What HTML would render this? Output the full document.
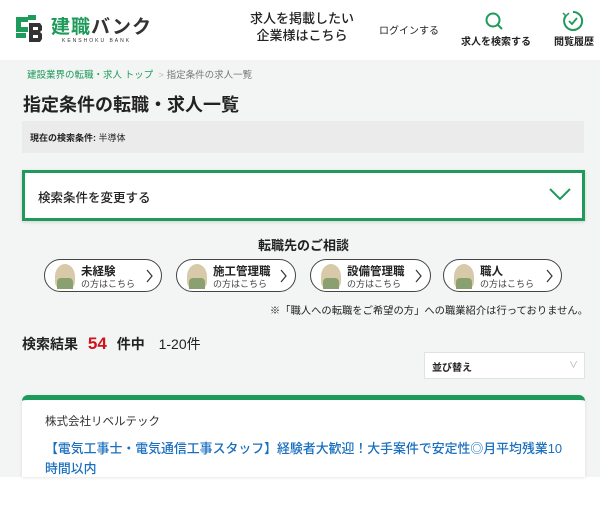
<!DOCTYPE html><html><head><meta charset="utf-8"><style>
*{margin:0;padding:0;box-sizing:border-box}
body{width:600px;height:518px;overflow:hidden;background:#fff;font-family:"Liberation Sans","Noto Sans CJK JP",sans-serif;color:#222;position:relative}
.a{position:absolute;white-space:nowrap}
.bg{position:absolute;left:0;top:60px;width:600px;height:417px;background:#f3f4f4}
.pill{position:absolute;top:259px;height:33px;border:1px solid #444;border-radius:17px;background:#fff}
.pill .f{position:absolute;left:10px;top:4px;width:20px;height:25px;border-radius:50% 50% 30% 30%;background:#d8c9a8}
.pill .f::after{content:"";position:absolute;left:2px;top:14px;width:16px;height:11px;background:#8aa070;border-radius:4px 4px 0 0}
.pill b{position:absolute;left:36px;top:3px;font-size:11.5px}
.pill s{text-decoration:none;position:absolute;left:36px;top:17px;font-size:9px;color:#444}
.pill svg{position:absolute;right:8px;top:9px}
</style></head><body>
<div class="bg"></div>
<svg class="a" style="left:14px;top:13px" width="30" height="30" viewBox="0 0 30 30"><path d="M2 4h12v5H7v5h7v5H2z" fill="#1e9a5a"/><path d="M14 2h8v5h-8zM2 20h10v5H2z" fill="#1e9a5a"/><path d="M15 10h11l2 3v4l-2 2 2 2v5l-2 3H15z" fill="#333"/><path d="M19 14h5v3h-5zM19 22h5v3h-5z" fill="#fff"/></svg>
<div class="a" style="left:51px;top:12px;font-size:19px;font-weight:bold;letter-spacing:1px"><span style="color:#1e9a5a">建職</span><span style="color:#333">バンク</span></div>
<div class="a" style="left:62px;top:38px;font-size:5px;letter-spacing:2px;color:#333">KENSHOKU BANK</div>
<div class="a" style="left:250px;top:10px;font-size:13px;line-height:17px;text-align:center;font-weight:500">求人を掲載したい<br>企業様はこちら</div>
<div class="a" style="left:379px;top:22px;font-size:10px">ログインする</div>
<svg class="a" style="left:484px;top:11px" width="20" height="20" viewBox="0 0 20 20"><circle cx="9" cy="9" r="6.5" fill="none" stroke="#1e9a5a" stroke-width="2"/><path d="M13.5 13.5l4.5 4.5" stroke="#1e9a5a" stroke-width="2"/></svg>
<div class="a" style="left:461px;top:33px;font-size:10px;font-weight:bold">求人を検索する</div>
<svg class="a" style="left:561px;top:9px" width="24" height="24" viewBox="0 0 24 24"><path d="M12 3a9 9 0 1 1-7 3.5" fill="none" stroke="#1e9a5a" stroke-width="2"/><path d="M2 4l3 3 3-3" fill="none" stroke="#1e9a5a" stroke-width="1.5"/><path d="M8 12l3 3 5-6" fill="none" stroke="#1e9a5a" stroke-width="1.8"/></svg>
<div class="a" style="left:554px;top:33px;font-size:10px;font-weight:bold">閲覧履歴</div>
<div class="a" style="left:27px;top:67px;font-size:9.5px;color:#1e9a5a">建設業界の転職・求人 トップ <span style="color:#bbb">&nbsp;&gt;&nbsp;</span><span style="color:#777">指定条件の求人一覧</span></div>
<div class="a" style="left:23px;top:91px;font-size:18px;font-weight:bold">指定条件の転職・求人一覧</div>
<div class="a" style="left:22px;top:121px;width:562px;height:32px;background:#ebebeb"></div>
<div class="a" style="left:30px;top:131px;font-size:9px"><b>現在の検索条件:</b> 半導体</div>
<div class="a" style="left:22px;top:170px;width:563px;height:51px;background:#fff;border:3px solid #1e9a5a;box-shadow:0 1px 3px rgba(0,0,0,.15)"></div>
<div class="a" style="left:38px;top:187px;font-size:12.5px;font-weight:500">検索条件を変更する</div>
<svg class="a" style="left:549px;top:187px" width="22" height="14" viewBox="0 0 22 14"><path d="M1 2l10 10L21 2" fill="none" stroke="#1e9a5a" stroke-width="2"/></svg>
<div class="a" style="left:258px;top:235px;font-size:13px;font-weight:bold">転職先のご相談</div>
<div class="pill" style="left:44px;width:118px"><span class="f"></span><b>未経験</b><s>の方はこちら</s><svg width="7" height="14" viewBox="0 0 7 14"><path d="M1 1l5 6-5 6" fill="none" stroke="#333" stroke-width="1.2"/></svg></div>
<div class="pill" style="left:176px;width:120px"><span class="f"></span><b>施工管理職</b><s>の方はこちら</s><svg width="7" height="14" viewBox="0 0 7 14"><path d="M1 1l5 6-5 6" fill="none" stroke="#333" stroke-width="1.2"/></svg></div>
<div class="pill" style="left:310px;width:121px"><span class="f"></span><b>設備管理職</b><s>の方はこちら</s><svg width="7" height="14" viewBox="0 0 7 14"><path d="M1 1l5 6-5 6" fill="none" stroke="#333" stroke-width="1.2"/></svg></div>
<div class="pill" style="left:443px;width:119px"><span class="f"></span><b>職人</b><s>の方はこちら</s><svg width="7" height="14" viewBox="0 0 7 14"><path d="M1 1l5 6-5 6" fill="none" stroke="#333" stroke-width="1.2"/></svg></div>
<div class="a" style="right:12px;top:302px;font-size:10.3px">※「職人への転職をご希望の方」への職業紹介は行っておりません。</div>
<div class="a" style="left:22px;top:334px;font-size:14px;font-weight:bold">検索結果 <span style="color:#d0121b;font-size:17px;margin:0 6px">54</span> 件中 <span style="font-weight:normal;margin-left:10px">1-20件</span></div>
<div class="a" style="left:424px;top:352px;width:161px;height:27px;background:#fff;border:1px solid #e2e2e2"></div>
<div class="a" style="left:432px;top:359px;font-size:10px;font-weight:bold">並び替え</div>
<div class="a" style="left:569px;top:358px;font-size:9px;color:#aaa">∨</div>
<div class="a" style="left:22px;top:395px;width:563px;height:82px;background:#fff;border-top:5px solid #1e9a5a;border-radius:6px 6px 0 0;box-shadow:0 1px 3px rgba(0,0,0,.1)"></div>
<div class="a" style="left:45px;top:413px;font-size:11.5px;color:#333">株式会社リベルテック</div>
<div class="a" style="left:45px;top:439px;font-size:12.9px;line-height:20px;color:#1a6fbf;font-weight:500">【電気工事士・電気通信工事スタッフ】経験者大歓迎！大手案件で安定性◎月平均残業10<br>時間以内</div>
</body></html>
